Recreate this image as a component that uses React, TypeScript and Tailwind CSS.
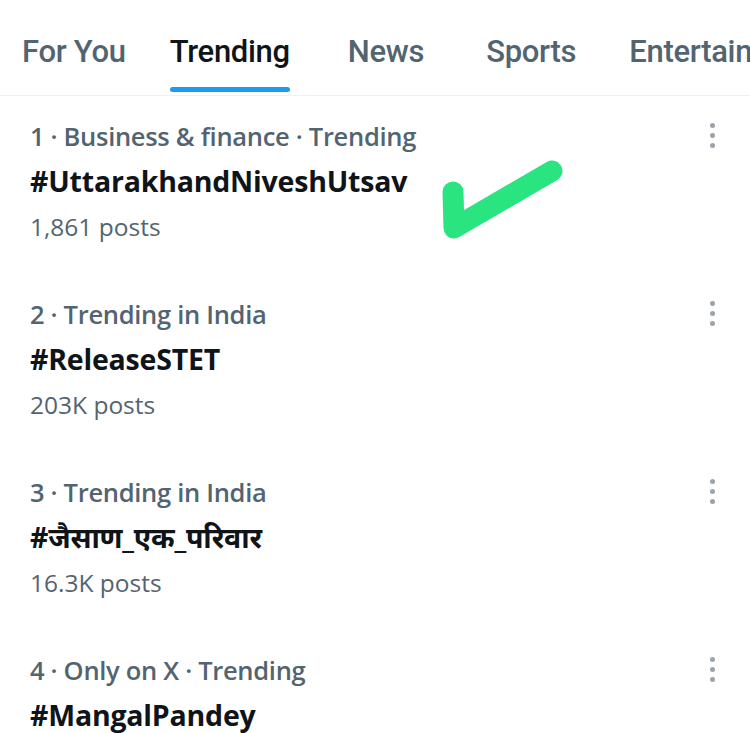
const tabs = ["For You", "Trending", "News", "Sports", "Entertainment"];

const trends = [
  { meta: "1 · Business & finance · Trending", tag: "#UttarakhandNiveshUtsav", posts: "1,861 posts" },
  { meta: "2 · Trending in India", tag: "#ReleaseSTET", posts: "203K posts" },
  { meta: "3 · Trending in India", tag: "#जैसाण_एक_परिवार", posts: "16.3K posts" },
  { meta: "4 · Only on X · Trending", tag: "#MangalPandey", posts: "" },
];

function Dots() {
  return (
    <div className="flex flex-col items-center gap-[5px] pt-[9px] pr-[35px]">
      <span className="block w-[5px] h-[5px] rounded-full bg-[#9aa3ab]" />
      <span className="block w-[5px] h-[5px] rounded-full bg-[#9aa3ab]" />
      <span className="block w-[5px] h-[5px] rounded-full bg-[#9aa3ab]" />
    </div>
  );
}

export default function App() {
  return (
    <main className="relative w-[750px] h-[733px] overflow-hidden bg-white font-['Open_Sans','Noto_Sans','Noto_Sans_Devanagari',sans-serif]">
      {/* tab bar */}
      <nav className="flex h-[96px] overflow-hidden border-b border-[#eff1f2] pl-[22px] whitespace-nowrap font-['Roboto',sans-serif]">
        {tabs.map((t, i) => (
          <div key={t} className={"flex flex-col shrink-0 " + (i === 0 ? "mr-[44px]" : i === 1 ? "mr-[58px]" : i === 2 ? "mr-[62px]" : "mr-[53px]")}>
            <span
              className={
                "block h-[87px] pt-[34px] leading-[36px] text-[31px] tracking-[-0.3px] font-medium " +
                (i === 1 ? "text-[#0f1419]" : "text-[#536471]")
              }
            >
              {t}
            </span>
            {i === 1 && <span className="h-[5px] rounded-full bg-[#1d9bf0]" />}
          </div>
        ))}
      </nav>

      {/* trends */}
      {trends.map((t) => (
        <div key={t.tag} className="flex justify-between pt-[18px] pb-[25px] pl-[30px]">
          <div className="flex flex-col">
            <span className="leading-[45px] text-[25.5px] font-semibold text-[#536471] tracking-[-0.3px]">{t.meta}</span>
            <span className="leading-[45px] text-[28.5px] font-bold text-[#0f1419] tracking-[-0.2px]">{t.tag}</span>
            {t.posts && <span className="leading-[45px] text-[24.5px] text-[#536471]">{t.posts}</span>}
          </div>
          <Dots />
        </div>
      ))}

      {/* hand-drawn check mark */}
      <svg className="absolute left-[430px] top-[140px]" width="150" height="110" viewBox="0 0 150 110">
        <path d="M23 52 L24 88 L122 31" fill="none" stroke="#2ae57f" strokeWidth="21" strokeLinecap="round" strokeLinejoin="round" />
      </svg>
    </main>
  );
}
